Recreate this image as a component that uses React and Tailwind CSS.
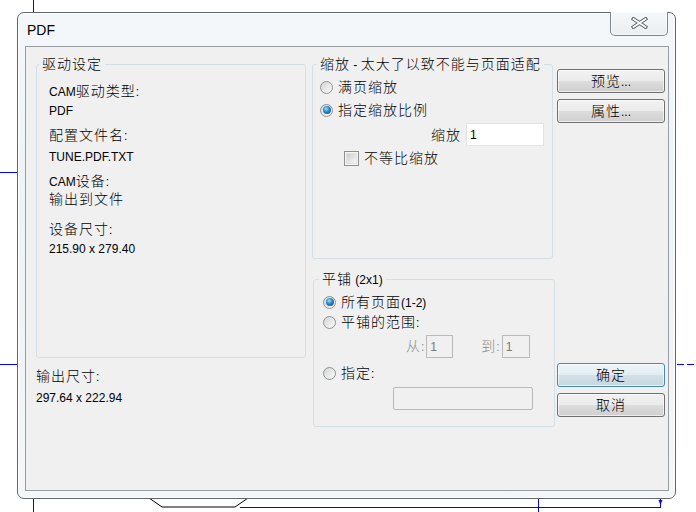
import React from "react";

const CJK = /([\u2e80-\u9fff\uff00-\uffef]+)/;

// mixed text: chinese runs a bit larger than the latin ones, like the dialog font
function T({ children }) {
  return String(children)
    .split(CJK)
    .filter(Boolean)
    .map((part, i) =>
      CJK.test(part) ? (
        <span key={i} className="text-[14px] font-light tracking-[1px]">
          {part}
        </span>
      ) : (
        <span key={i} className="text-[12px]">
          {part}
        </span>
      )
    );
}

function Row({ className = "", children }) {
  return <div className={`h-[18px] leading-[18px] whitespace-pre ${className}`}>{children}</div>;
}

function Group({ title, className = "", titleClass = "", children }) {
  return (
    <div className={`rounded-[3px] border border-[#d5dfe6] ${className}`}>
      <div className={`-mt-[9px] h-[16px] w-fit bg-[#f0f0f0] px-[3px] leading-[16px] whitespace-pre ${titleClass}`}>
        <T>{title}</T>
      </div>
      {children}
    </div>
  );
}

function Radio({ checked }) {
  return (
    <span className="flex h-[13px] w-[13px] shrink-0 items-center justify-center rounded-full border border-[#8e9294] bg-[linear-gradient(135deg,#d4d4d4,#fbfbfb)]">
      {checked && (
        <span className="h-[8px] w-[8px] rounded-full bg-[radial-gradient(circle_at_40%_35%,#9bdcfb,#2a85c6_45%,#0c3f78)]" />
      )}
    </span>
  );
}

function RadioRow({ checked, label, className = "" }) {
  return (
    <div className={`flex h-[18px] items-center ${className}`}>
      <Radio checked={checked} />
      <span className="ml-[5px] leading-[18px] whitespace-pre">
        <T>{label}</T>
      </span>
    </div>
  );
}

function Button({ label, primary }) {
  return (
    <button
      type="button"
      className={
        primary
          ? "flex h-[24px] w-full items-center justify-center rounded-[3px] border border-[#4a88b6] bg-[linear-gradient(to_bottom,#edf5fa_0%,#e2edf4_50%,#d3e0e8_50%,#c8d6df_100%)] shadow-[inset_0_0_0_1px_#ffffffa0]"
          : "flex h-[24px] w-full items-center justify-center rounded-[3px] border border-[#707070] bg-[linear-gradient(to_bottom,#f2f2f2_0%,#ebebeb_50%,#dddddd_50%,#cfcfcf_100%)] shadow-[inset_0_0_0_1px_#ffffffa0]"
      }
    >
      <span className="leading-[18px] text-black">
        <T>{label}</T>
      </span>
    </button>
  );
}

function Backdrop() {
  return (
    <svg className="absolute inset-0" width="696" height="512" viewBox="0 0 696 512">
      <g stroke="#0000ff" strokeWidth="1" fill="none">
        <line x1="33.5" y1="0" x2="33.5" y2="13" />
        <line x1="0" y1="172.5" x2="18" y2="172.5" />
        <line x1="0" y1="364.5" x2="18" y2="364.5" />
        <line x1="33.5" y1="497" x2="33.5" y2="512" />
        <line x1="240" y1="507.5" x2="661" y2="507.5" />
        <line x1="538.5" y1="497" x2="538.5" y2="512" />
        <line x1="660.5" y1="497" x2="660.5" y2="507" />
        <line x1="677" y1="364.5" x2="696" y2="364.5" strokeDasharray="7 3" />
      </g>
      <path d="M658.5 500 L660.5 505 L662.5 500 Z" fill="#0000ff" />
      <polyline points="149,498 162,507 235,507 248,498" stroke="#000" strokeWidth="1" fill="none" />
    </svg>
  );
}

export default function App() {
  return (
    <div className="relative h-[512px] w-[696px] overflow-hidden bg-white font-['Liberation_Sans','Noto_Sans_CJK_SC',sans-serif] text-black">
      <Backdrop />
      <div className="relative pl-[17px] pt-[12px]">
        <div className="flex h-[487px] w-[659px] flex-col rounded-[7px] border border-[#5f6569] bg-[linear-gradient(to_bottom,#f3f7f9,#eef3f5_40%,#f4f6f7)] shadow-[inset_0_0_0_1px_#ffffff]">
          {/* title bar */}
          <div className="flex h-[33px] shrink-0 items-start justify-between">
            <div className="pl-[9px] pt-[9px] text-[14px] leading-[16px]">PDF</div>
            <div className="-mt-[1px] mr-[7px] flex h-[24px] w-[58px] items-center justify-center rounded-b-[5px] border border-t-0 border-[#7d8790] bg-[linear-gradient(to_bottom,#f5f8fa,#e9eef1)] shadow-[inset_0_0_0_1px_#ffffff90]">
              <svg width="17" height="12" viewBox="0 0 17 12" className="-mt-[2px]">
                <g strokeLinecap="square">
                  <path d="M2.5 2 L14.5 10 M14.5 2 L2.5 10" stroke="#5e6468" strokeWidth="3.8" />
                  <path d="M2.5 2 L14.5 10 M14.5 2 L2.5 10" stroke="#ffffff" strokeWidth="1.8" />
                </g>
              </svg>
            </div>
          </div>

          {/* client area */}
          <div className="ml-[7px] flex h-[445px] w-[644px] border border-[#9a9d9f] bg-[#f0f0f0]">
            {/* left column */}
            <div className="ml-[10px] w-[270px]">
              <Group title="驱动设定" className="mt-[17px] h-[294px]" titleClass="ml-[2px]">
                <div className="pl-[12px]">
                  <Row className="mt-[10px]">
                    <T>CAM驱动类型:</T>
                  </Row>
                  <Row className="mt-[1px]">
                    <T>PDF</T>
                  </Row>
                  <Row className="mt-[7px]">
                    <T>配置文件名:</T>
                  </Row>
                  <Row className="mt-[3px]">
                    <T>TUNE.PDF.TXT</T>
                  </Row>
                  <Row className="mt-[7px]">
                    <T>CAM设备:</T>
                  </Row>
                  <Row>
                    <T>输出到文件</T>
                  </Row>
                  <Row className="mt-[12px]">
                    <T>设备尺寸:</T>
                  </Row>
                  <Row className="mt-[1px]">
                    <T>215.90 x 279.40</T>
                  </Row>
                </div>
              </Group>
              <Row className="mt-[9px]">
                <T>输出尺寸:</T>
              </Row>
              <Row className="mt-[3px]">
                <T>297.64 x 222.94</T>
              </Row>
            </div>

            {/* middle column */}
            <div className="ml-[6px] w-[243px]">
              <Group title="缩放 - 太大了以致不能与页面适配" className="mt-[17px] h-[195px] w-[241px]" titleClass="ml-[4px]">
                <div className="pl-[7px]">
                  <RadioRow className="mt-[6px]" label="满页缩放" />
                  <RadioRow className="mt-[5px]" checked label="指定缩放比例" />
                </div>
                <div className="mt-[4px] flex h-[23px] items-center justify-end pr-[8px]">
                  <span className="leading-[18px]">
                    <T>缩放</T>
                  </span>
                  <div className="ml-[5px] flex h-[23px] w-[78px] items-center border border-[#dfe4e8] bg-white pl-[3px] text-[12px]">
                    1
                  </div>
                </div>
                <div className="mt-[3px] flex h-[18px] items-center pl-[31px]">
                  <span className="flex h-[15px] w-[15px] items-center justify-center border border-[#8f8f8f] bg-[#f6f6f6]">
                    <span className="h-[11px] w-[11px] border border-[#e2e2e2] bg-[linear-gradient(135deg,#cdcdcd,#f8f8f8)]" />
                  </span>
                  <span className="ml-[5px] leading-[18px]">
                    <T>不等比缩放</T>
                  </span>
                </div>
              </Group>

              <Group title="平铺 (2x1)" className="ml-[1px] mt-[20px] h-[148px] w-[242px]" titleClass="ml-[5px]">
                <div className="pl-[9px]">
                  <RadioRow className="mt-[6px]" checked label="所有页面(1-2)" />
                  <RadioRow className="mt-[2px]" label="平铺的范围:" />
                </div>
                <div className="mt-[4px] flex h-[23px] items-center pl-[92px] text-[#8b8b8b]">
                  <span className="leading-[18px]">
                    <T>从:</T>
                  </span>
                  <div className="ml-[2px] flex h-[23px] w-[27px] items-center border border-[#b9b9b9] bg-[#f0f0f0] pl-[3px] text-[12px] text-[#7a7a7a]">
                    1
                  </div>
                  <span className="ml-[28px] leading-[18px]">
                    <T>到:</T>
                  </span>
                  <div className="ml-[2px] flex h-[23px] w-[28px] items-center border border-[#b9b9b9] bg-[#f0f0f0] pl-[3px] text-[12px] text-[#7a7a7a]">
                    1
                  </div>
                </div>
                <div className="pl-[9px]">
                  <RadioRow className="mt-[6px]" label="指定:" />
                </div>
                <div className="ml-[79px] mt-[5px] h-[23px] w-[140px] rounded-[2px] border border-[#b9b9b9] bg-[#f0f0f0]" />
              </Group>
            </div>

            {/* buttons */}
            <div className="ml-[2px] flex w-[108px] flex-col">
              <div className="mt-[22px]">
                <Button label="预览..." />
              </div>
              <div className="mt-[6px]">
                <Button label="属性..." />
              </div>
              <div className="mt-[240px]">
                <Button label="确定" primary />
              </div>
              <div className="mt-[6px]">
                <Button label="取消" />
              </div>
            </div>
          </div>
        </div>
      </div>
    </div>
  );
}
